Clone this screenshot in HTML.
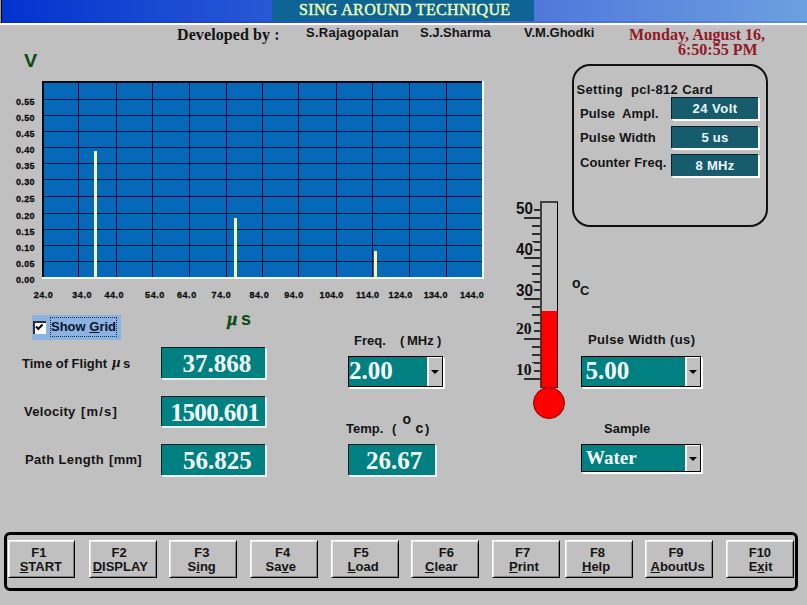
<!DOCTYPE html><html><head><meta charset="utf-8"><style>
*{margin:0;padding:0;box-sizing:border-box}
html,body{width:807px;height:605px;overflow:hidden;background:#c0c0c0;position:relative;font-family:"Liberation Sans",sans-serif}
.abs{position:absolute;white-space:pre;line-height:1}
.val{position:absolute;background:#008080;border-top:1px solid #0c2222;border-left:1px solid #0c2222;box-shadow:1px 1px 0 #f4ffff,2px 2px 0 #e8f4f4}
.valtxt{position:absolute;font-family:"Liberation Serif",serif;font-weight:bold;font-size:25px;color:#f6ffff;line-height:1;white-space:pre}
.gl{position:absolute;background:#000a3c}
.tick{position:absolute;height:2px;background:#303030}
.btn{position:absolute;top:540px;height:38px;background:#c0c0c0;border-top:1px solid #ffffff;border-left:1px solid #ffffff;border-right:1px solid #000;border-bottom:1px solid #000;box-shadow:inset 1px 1px 0 #e8e8e8,inset -1px -1px 0 #808080}
.bt{position:absolute;left:0;right:0;text-align:center;font-family:"Liberation Sans",sans-serif;font-weight:bold;font-size:13px;color:#141414;line-height:1;white-space:pre}
.u{text-decoration:underline}
.combo{position:absolute;background:#008080;border:1px solid #000;box-shadow:1px 1px 0 #fff,2px 2px 0 #fff}
.cbtn{position:absolute;top:0;bottom:0;right:0;width:15px;background:#c0c0c0;border-left:2px solid #fff;border-top:1px solid #fff}
.arr{position:absolute;left:1.5px;width:0;height:0;border-left:4px solid transparent;border-right:4px solid transparent;border-top:4px solid #000}
.sbox{position:absolute;left:671px;width:87px;height:22px;background:#165c6c;border-top:1px solid #0a2030;border-left:1px solid #0a2030;box-shadow:1px 1px 0 #fff,2px 2px 0 #fff}
.stxt{position:absolute;left:0;right:0;text-align:center;font-family:"Liberation Sans",sans-serif;font-weight:bold;font-size:13px;color:#eef8ff;line-height:1;white-space:pre}
</style></head><body>

<div class="abs" style="left:0;top:0;width:807px;height:23px;background:linear-gradient(90deg,#0432d0 0%,#2858d4 33%,#5078dc 66.5%,#6ca0e0 100%)"></div>
<div class="abs" style="left:0;top:0;width:1px;height:24px;background:#a0a0a0"></div>
<div class="abs" style="left:1px;top:0;width:1px;height:24px;background:#000"></div>
<div class="abs" style="left:0;top:21px;width:807px;height:2px;background:rgba(0,20,120,0.12)"></div>
<div class="abs" style="left:0;top:23px;width:807px;height:2px;background:#ffffff"></div>
<div class="abs" style="left:0;top:25px;width:807px;height:3px;background:#c8c2c6"></div>
<div class="abs" style="left:272px;top:0;width:262px;height:21px;background:#0e6494"></div>
<div class="abs" style="left:299px;top:2px;font-family:'Liberation Serif',serif;font-weight:normal;font-size:16px;letter-spacing:0.35px;color:#f4ffc0;-webkit-text-stroke:0.45px #f0fcb0">SING AROUND TECHNIQUE</div>
<div class="abs" style="left:177px;top:27px;font-family:'Liberation Serif',serif;font-weight:bold;font-size:16px;letter-spacing:0.1px;color:#141414;">Developed by :</div>
<div class="abs" style="left:306px;top:26px;font-family:'Liberation Sans',sans-serif;font-weight:bold;font-size:13px;letter-spacing:0.25px;color:#141414;">S.Rajagopalan</div>
<div class="abs" style="left:420px;top:26px;font-family:'Liberation Sans',sans-serif;font-weight:bold;font-size:13px;letter-spacing:0px;color:#141414;">S.J.Sharma</div>
<div class="abs" style="left:524px;top:26px;font-family:'Liberation Sans',sans-serif;font-weight:bold;font-size:13px;letter-spacing:0px;color:#141414;">V.M.Ghodki</div>
<div class="abs" style="left:629px;top:27px;font-family:'Liberation Serif',serif;font-weight:bold;font-size:16px;letter-spacing:0px;color:#921828;">Monday, August 16,</div>
<div class="abs" style="left:678px;top:42px;font-family:'Liberation Serif',serif;font-weight:bold;font-size:16px;letter-spacing:0px;color:#921828;">6:50:55 PM</div>
<div class="abs" style="left:24px;top:52px;font-family:'Liberation Sans',sans-serif;font-weight:bold;font-size:18px;letter-spacing:0px;color:#0c4a12;transform:scaleX(1.1);transform-origin:0 0">V</div>
<div class="abs" style="left:42px;top:81px;width:442px;height:198px;background:#f4fcff"></div>
<div class="abs" style="left:42px;top:81px;width:440px;height:196px;background:#000814"></div>
<div class="abs" style="left:44px;top:83px;width:438px;height:194px;background:#0568b8"></div>
<div class="gl" style="left:78px;top:83px;width:1px;height:194px"></div>
<div class="gl" style="left:116px;top:83px;width:1px;height:194px"></div>
<div class="gl" style="left:152px;top:83px;width:1px;height:194px"></div>
<div class="gl" style="left:189px;top:83px;width:1px;height:194px"></div>
<div class="gl" style="left:226px;top:83px;width:1px;height:194px"></div>
<div class="gl" style="left:262px;top:83px;width:1px;height:194px"></div>
<div class="gl" style="left:298px;top:83px;width:1px;height:194px"></div>
<div class="gl" style="left:336px;top:83px;width:1px;height:194px"></div>
<div class="gl" style="left:372px;top:83px;width:1px;height:194px"></div>
<div class="gl" style="left:409px;top:83px;width:1px;height:194px"></div>
<div class="gl" style="left:446px;top:83px;width:1px;height:194px"></div>
<div class="gl" style="left:44px;top:99px;width:438px;height:1px"></div>
<div class="gl" style="left:44px;top:115px;width:438px;height:1px"></div>
<div class="gl" style="left:44px;top:131px;width:438px;height:1px"></div>
<div class="gl" style="left:44px;top:147px;width:438px;height:1px"></div>
<div class="gl" style="left:44px;top:163px;width:438px;height:1px"></div>
<div class="gl" style="left:44px;top:179px;width:438px;height:1px"></div>
<div class="gl" style="left:44px;top:196px;width:438px;height:1px"></div>
<div class="gl" style="left:44px;top:213px;width:438px;height:1px"></div>
<div class="gl" style="left:44px;top:229px;width:438px;height:1px"></div>
<div class="gl" style="left:44px;top:245px;width:438px;height:1px"></div>
<div class="gl" style="left:44px;top:261px;width:438px;height:1px"></div>
<div class="abs" style="left:94px;top:151px;width:3px;height:126px;background:#f4f6a0"></div>
<div class="abs" style="left:234px;top:218px;width:3px;height:59px;background:#f4f6a0"></div>
<div class="abs" style="left:374px;top:251px;width:3px;height:26px;background:#f4f6a0"></div>
<div class="abs" style="left:16px;top:98px;font-family:'Liberation Sans',sans-serif;font-weight:bold;font-size:9px;letter-spacing:0.35px;color:#0c0c0c;-webkit-text-stroke:0.3px #0c0c0c">0.55</div>
<div class="abs" style="left:16px;top:114px;font-family:'Liberation Sans',sans-serif;font-weight:bold;font-size:9px;letter-spacing:0.35px;color:#0c0c0c;-webkit-text-stroke:0.3px #0c0c0c">0.50</div>
<div class="abs" style="left:16px;top:130px;font-family:'Liberation Sans',sans-serif;font-weight:bold;font-size:9px;letter-spacing:0.35px;color:#0c0c0c;-webkit-text-stroke:0.3px #0c0c0c">0.45</div>
<div class="abs" style="left:16px;top:146px;font-family:'Liberation Sans',sans-serif;font-weight:bold;font-size:9px;letter-spacing:0.35px;color:#0c0c0c;-webkit-text-stroke:0.3px #0c0c0c">0.40</div>
<div class="abs" style="left:16px;top:162px;font-family:'Liberation Sans',sans-serif;font-weight:bold;font-size:9px;letter-spacing:0.35px;color:#0c0c0c;-webkit-text-stroke:0.3px #0c0c0c">0.35</div>
<div class="abs" style="left:16px;top:178px;font-family:'Liberation Sans',sans-serif;font-weight:bold;font-size:9px;letter-spacing:0.35px;color:#0c0c0c;-webkit-text-stroke:0.3px #0c0c0c">0.30</div>
<div class="abs" style="left:16px;top:195px;font-family:'Liberation Sans',sans-serif;font-weight:bold;font-size:9px;letter-spacing:0.35px;color:#0c0c0c;-webkit-text-stroke:0.3px #0c0c0c">0.25</div>
<div class="abs" style="left:16px;top:212px;font-family:'Liberation Sans',sans-serif;font-weight:bold;font-size:9px;letter-spacing:0.35px;color:#0c0c0c;-webkit-text-stroke:0.3px #0c0c0c">0.20</div>
<div class="abs" style="left:16px;top:228px;font-family:'Liberation Sans',sans-serif;font-weight:bold;font-size:9px;letter-spacing:0.35px;color:#0c0c0c;-webkit-text-stroke:0.3px #0c0c0c">0.15</div>
<div class="abs" style="left:16px;top:244px;font-family:'Liberation Sans',sans-serif;font-weight:bold;font-size:9px;letter-spacing:0.35px;color:#0c0c0c;-webkit-text-stroke:0.3px #0c0c0c">0.10</div>
<div class="abs" style="left:16px;top:260px;font-family:'Liberation Sans',sans-serif;font-weight:bold;font-size:9px;letter-spacing:0.35px;color:#0c0c0c;-webkit-text-stroke:0.3px #0c0c0c">0.05</div>
<div class="abs" style="left:16px;top:276px;font-family:'Liberation Sans',sans-serif;font-weight:bold;font-size:9px;letter-spacing:0.35px;color:#0c0c0c;-webkit-text-stroke:0.3px #0c0c0c">0.00</div>
<div class="abs" style="left:33.7px;top:291px;font-family:'Liberation Sans',sans-serif;font-weight:bold;font-size:9px;letter-spacing:0.55px;color:#0c0c0c;-webkit-text-stroke:0.3px #0c0c0c">24.0</div>
<div class="abs" style="left:72.3px;top:291px;font-family:'Liberation Sans',sans-serif;font-weight:bold;font-size:9px;letter-spacing:0.55px;color:#0c0c0c;-webkit-text-stroke:0.3px #0c0c0c">34.0</div>
<div class="abs" style="left:104.4px;top:291px;font-family:'Liberation Sans',sans-serif;font-weight:bold;font-size:9px;letter-spacing:0.55px;color:#0c0c0c;-webkit-text-stroke:0.3px #0c0c0c">44.0</div>
<div class="abs" style="left:145.1px;top:291px;font-family:'Liberation Sans',sans-serif;font-weight:bold;font-size:9px;letter-spacing:0.55px;color:#0c0c0c;-webkit-text-stroke:0.3px #0c0c0c">54.0</div>
<div class="abs" style="left:177.0px;top:291px;font-family:'Liberation Sans',sans-serif;font-weight:bold;font-size:9px;letter-spacing:0.55px;color:#0c0c0c;-webkit-text-stroke:0.3px #0c0c0c">64.0</div>
<div class="abs" style="left:211.6px;top:291px;font-family:'Liberation Sans',sans-serif;font-weight:bold;font-size:9px;letter-spacing:0.55px;color:#0c0c0c;-webkit-text-stroke:0.3px #0c0c0c">74.0</div>
<div class="abs" style="left:249.5px;top:291px;font-family:'Liberation Sans',sans-serif;font-weight:bold;font-size:9px;letter-spacing:0.55px;color:#0c0c0c;-webkit-text-stroke:0.3px #0c0c0c">84.0</div>
<div class="abs" style="left:284.2px;top:291px;font-family:'Liberation Sans',sans-serif;font-weight:bold;font-size:9px;letter-spacing:0.55px;color:#0c0c0c;-webkit-text-stroke:0.3px #0c0c0c">94.0</div>
<div class="abs" style="left:319.59999999999997px;top:291px;font-family:'Liberation Sans',sans-serif;font-weight:bold;font-size:9px;letter-spacing:0.3px;color:#0c0c0c;-webkit-text-stroke:0.3px #0c0c0c">104.0</div>
<div class="abs" style="left:355.9px;top:291px;font-family:'Liberation Sans',sans-serif;font-weight:bold;font-size:9px;letter-spacing:0.3px;color:#0c0c0c;-webkit-text-stroke:0.3px #0c0c0c">114.0</div>
<div class="abs" style="left:388.59999999999997px;top:291px;font-family:'Liberation Sans',sans-serif;font-weight:bold;font-size:9px;letter-spacing:0.3px;color:#0c0c0c;-webkit-text-stroke:0.3px #0c0c0c">124.0</div>
<div class="abs" style="left:423.7px;top:291px;font-family:'Liberation Sans',sans-serif;font-weight:bold;font-size:9px;letter-spacing:0.3px;color:#0c0c0c;-webkit-text-stroke:0.3px #0c0c0c">134.0</div>
<div class="abs" style="left:460.0px;top:291px;font-family:'Liberation Sans',sans-serif;font-weight:bold;font-size:9px;letter-spacing:0.3px;color:#0c0c0c;-webkit-text-stroke:0.3px #0c0c0c">144.0</div>
<div class="abs" style="left:32px;top:315px;width:89px;height:25px;background:#8cb2e2"></div>
<div class="abs" style="left:33px;top:321px;width:13px;height:13px;background:#fff;border-top:2px solid #303030;border-left:2px solid #303030"></div>
<svg class="abs" style="left:34px;top:322px" width="12" height="12" viewBox="0 0 12 12"><path d="M2 4.5 L4.3 7 L8.5 2.5" stroke="#000" stroke-width="1.9" fill="none"/></svg>
<div class="abs" style="left:50px;top:317px;width:67px;height:20px;border:1px dotted #203050"></div>
<div class="abs" style="left:51px;top:320px;font-family:'Liberation Sans',sans-serif;font-weight:bold;font-size:13px;letter-spacing:0px;color:#0a1428;">Show <span class="u">G</span>rid</div>
<div class="abs" style="left:227px;top:310px;font-family:'Liberation Serif',serif;font-weight:bold;font-size:18px;letter-spacing:0px;color:#0c4a12;font-style:italic;-webkit-text-stroke:0.4px #0c4a12">µ</div>
<div class="abs" style="left:241px;top:310px;font-family:'Liberation Sans',sans-serif;font-weight:bold;font-size:18px;letter-spacing:0px;color:#0c4a12;">s</div>
<div class="abs" style="left:22px;top:357px;font-family:'Liberation Sans',sans-serif;font-weight:bold;font-size:13px;letter-spacing:0px;color:#141414;">Time of Flight</div>
<div class="abs" style="left:112px;top:355px;font-family:'Liberation Serif',serif;font-weight:bold;font-size:15px;letter-spacing:0px;color:#141414;font-style:italic">µ</div>
<div class="abs" style="left:123px;top:357px;font-family:'Liberation Sans',sans-serif;font-weight:bold;font-size:13px;letter-spacing:0px;color:#141414;">s</div>
<div class="abs" style="left:24px;top:405px;font-family:'Liberation Sans',sans-serif;font-weight:bold;font-size:13px;letter-spacing:0.3px;color:#141414;">Velocity</div>
<div class="abs" style="left:81px;top:405px;font-family:'Liberation Sans',sans-serif;font-weight:bold;font-size:13px;letter-spacing:1.2px;color:#141414;">[m/s]</div>
<div class="abs" style="left:25px;top:453px;font-family:'Liberation Sans',sans-serif;font-weight:bold;font-size:13px;letter-spacing:0.35px;color:#141414;">Path Length</div>
<div class="abs" style="left:109px;top:453px;font-family:'Liberation Sans',sans-serif;font-weight:bold;font-size:13px;letter-spacing:0.3px;color:#141414;">[mm]</div>
<div class="val" style="left:161px;top:347px;width:104px;height:31px"></div>
<div class="valtxt" style="left:182.5px;top:351px">37.868</div>
<div class="val" style="left:161px;top:396px;width:104px;height:30px"></div>
<div class="valtxt" style="left:170.5px;top:400px;letter-spacing:-0.6px">1500.601</div>
<div class="val" style="left:161px;top:444px;width:104px;height:31px"></div>
<div class="valtxt" style="left:183px;top:448px">56.825</div>
<div class="abs" style="left:354px;top:334px;font-family:'Liberation Sans',sans-serif;font-weight:bold;font-size:13px;letter-spacing:0px;color:#141414;">Freq.</div>
<div class="abs" style="left:400px;top:334px;font-family:'Liberation Sans',sans-serif;font-weight:bold;font-size:13px;letter-spacing:0px;color:#141414;">(</div>
<div class="abs" style="left:407px;top:334px;font-family:'Liberation Sans',sans-serif;font-weight:bold;font-size:13px;letter-spacing:0px;color:#141414;">MHz</div>
<div class="abs" style="left:437px;top:334px;font-family:'Liberation Sans',sans-serif;font-weight:bold;font-size:13px;letter-spacing:0px;color:#141414;">)</div>
<div class="combo" style="left:348px;top:356px;width:95px;height:31px"><div class="cbtn"><div class="arr" style="top:12px"></div></div></div>
<div class="valtxt" style="left:349px;top:358px">2.00</div>
<div class="abs" style="left:346px;top:422px;font-family:'Liberation Sans',sans-serif;font-weight:bold;font-size:13px;letter-spacing:0px;color:#141414;">Temp.</div>
<div class="abs" style="left:392px;top:422px;font-family:'Liberation Sans',sans-serif;font-weight:bold;font-size:13px;letter-spacing:0px;color:#141414;">(</div>
<div class="abs" style="left:402.5px;top:412px;font-family:'Liberation Sans',sans-serif;font-weight:bold;font-size:14px;letter-spacing:0px;color:#141414;">o</div>
<div class="abs" style="left:415.5px;top:421px;font-family:'Liberation Sans',sans-serif;font-weight:bold;font-size:14px;letter-spacing:0px;color:#141414;">c</div>
<div class="abs" style="left:425px;top:422px;font-family:'Liberation Sans',sans-serif;font-weight:bold;font-size:13px;letter-spacing:0px;color:#141414;">)</div>
<div class="val" style="left:348px;top:444px;width:87px;height:31px"></div>
<div class="valtxt" style="left:366px;top:448px">26.67</div>
<div class="abs" style="left:588px;top:333px;font-family:'Liberation Sans',sans-serif;font-weight:bold;font-size:13px;letter-spacing:0.35px;color:#141414;">Pulse Width (us)</div>
<div class="combo" style="left:581px;top:356px;width:120px;height:31px"><div class="cbtn"><div class="arr" style="top:12px"></div></div></div>
<div class="valtxt" style="left:585.5px;top:358px">5.00</div>
<div class="abs" style="left:604px;top:422px;font-family:'Liberation Sans',sans-serif;font-weight:bold;font-size:13px;letter-spacing:0px;color:#141414;">Sample</div>
<div class="combo" style="left:581px;top:444px;width:120px;height:28px"><div class="cbtn"><div class="arr" style="top:11px"></div></div></div>
<div class="valtxt" style="left:586px;top:448px;font-size:19px">Water</div>
<div class="abs" style="left:571.5px;top:63.5px;width:196px;height:163px;border:2px solid #101010;border-radius:18px"></div>
<div class="abs" style="left:576.5px;top:83px;font-family:'Liberation Sans',sans-serif;font-weight:bold;font-size:13px;letter-spacing:0.35px;color:#141414;">Setting  pcl-812 Card</div>
<div class="abs" style="left:580px;top:107px;font-family:'Liberation Sans',sans-serif;font-weight:bold;font-size:13px;letter-spacing:0.1px;color:#141414;">Pulse  Ampl.</div>
<div class="abs" style="left:580px;top:131px;font-family:'Liberation Sans',sans-serif;font-weight:bold;font-size:13px;letter-spacing:0.15px;color:#141414;">Pulse Width</div>
<div class="abs" style="left:580px;top:156px;font-family:'Liberation Sans',sans-serif;font-weight:bold;font-size:13px;letter-spacing:0.1px;color:#141414;">Counter Freq.</div>
<div class="sbox" style="top:97px"><div class="stxt" style="top:4px;letter-spacing:0.5px">24 Volt</div></div>
<div class="sbox" style="top:126px"><div class="stxt" style="top:4px;letter-spacing:0.2px">5 us</div></div>
<div class="sbox" style="top:154px"><div class="stxt" style="top:4px;letter-spacing:0.3px">8 MHz</div></div>
<div class="abs" style="left:540px;top:201px;width:18px;height:187px;background:#c0c0c0;border-left:2px solid #404040;border-top:2px solid #404040;border-right:1px solid #000"></div>
<div class="abs" style="left:541px;top:311px;width:16px;height:77px;background:#ff0000;border-left:1px solid #a00000;border-bottom:1px solid #900000"></div>
<div class="abs" style="left:533px;top:387px;width:32px;height:32px;border-radius:50%;background:#ff0000;border:1.5px solid #8a0000"></div>
<div class="tick" style="left:532px;top:209px;width:8px"></div>
<div class="tick" style="left:524px;top:217px;width:16px"></div>
<div class="tick" style="left:532px;top:225px;width:8px"></div>
<div class="tick" style="left:532px;top:233px;width:8px"></div>
<div class="tick" style="left:532px;top:241px;width:8px"></div>
<div class="tick" style="left:532px;top:249px;width:8px"></div>
<div class="tick" style="left:524px;top:257px;width:16px"></div>
<div class="tick" style="left:532px;top:265px;width:8px"></div>
<div class="tick" style="left:532px;top:273px;width:8px"></div>
<div class="tick" style="left:532px;top:281px;width:8px"></div>
<div class="tick" style="left:532px;top:289px;width:8px"></div>
<div class="tick" style="left:524px;top:298px;width:16px"></div>
<div class="tick" style="left:532px;top:306px;width:8px"></div>
<div class="tick" style="left:532px;top:314px;width:8px"></div>
<div class="tick" style="left:532px;top:322px;width:8px"></div>
<div class="tick" style="left:532px;top:330px;width:8px"></div>
<div class="tick" style="left:524px;top:338px;width:16px"></div>
<div class="tick" style="left:532px;top:346px;width:8px"></div>
<div class="tick" style="left:532px;top:354px;width:8px"></div>
<div class="tick" style="left:532px;top:362px;width:8px"></div>
<div class="tick" style="left:532px;top:370px;width:8px"></div>
<div class="tick" style="left:524px;top:378px;width:16px"></div>
<div class="abs" style="left:515px;top:201px;width:19px;height:14px;background:#c0c0c0"></div>
<div class="abs" style="left:516px;top:201px;font-family:'Liberation Sans',sans-serif;font-weight:bold;font-size:16px;letter-spacing:0px;color:#101010;transform:scaleX(0.95);transform-origin:0 0">50</div>
<div class="abs" style="left:515px;top:242px;width:19px;height:14px;background:#c0c0c0"></div>
<div class="abs" style="left:516px;top:242px;font-family:'Liberation Sans',sans-serif;font-weight:bold;font-size:16px;letter-spacing:0px;color:#101010;transform:scaleX(0.95);transform-origin:0 0">40</div>
<div class="abs" style="left:515px;top:282px;width:19px;height:14px;background:#c0c0c0"></div>
<div class="abs" style="left:516px;top:283px;font-family:'Liberation Sans',sans-serif;font-weight:bold;font-size:16px;letter-spacing:0px;color:#101010;transform:scaleX(0.95);transform-origin:0 0">30</div>
<div class="abs" style="left:515px;top:322px;width:19px;height:14px;background:#c0c0c0"></div>
<div class="abs" style="left:516px;top:320px;font-family:'Liberation Serif',serif;font-weight:bold;font-size:17px;letter-spacing:0px;color:#101010;transform:scaleX(0.92);transform-origin:0 0">20</div>
<div class="abs" style="left:515px;top:363px;width:19px;height:14px;background:#c0c0c0"></div>
<div class="abs" style="left:516px;top:361px;font-family:'Liberation Serif',serif;font-weight:bold;font-size:17px;letter-spacing:0px;color:#101010;transform:scaleX(0.92);transform-origin:0 0">10</div>
<div class="abs" style="left:572px;top:276px;font-family:'Liberation Sans',sans-serif;font-weight:bold;font-size:14px;letter-spacing:0px;color:#141414;">o</div>
<div class="abs" style="left:580px;top:284px;font-family:'Liberation Sans',sans-serif;font-weight:bold;font-size:13px;letter-spacing:0px;color:#141414;">C</div>
<div class="abs" style="left:4px;top:532px;width:794px;height:59px;border:3px solid #000;border-radius:6px"></div>
<div class="btn" style="left:8px;width:67px"></div>
<div class="abs" style="left:31.3px;top:546px;font-family:'Liberation Sans',sans-serif;font-weight:bold;font-size:13px;letter-spacing:0px;color:#141414;">F1</div>
<div class="abs" style="left:19.7px;top:560px;font-family:'Liberation Sans',sans-serif;font-weight:bold;font-size:13px;letter-spacing:0px;color:#141414;"><span class="u">S</span>TART</div>
<div class="btn" style="left:89px;width:68px"></div>
<div class="abs" style="left:111.6px;top:546px;font-family:'Liberation Sans',sans-serif;font-weight:bold;font-size:13px;letter-spacing:0px;color:#141414;">F2</div>
<div class="abs" style="left:92.7px;top:560px;font-family:'Liberation Sans',sans-serif;font-weight:bold;font-size:13px;letter-spacing:0px;color:#141414;"><span class="u">D</span>ISPLAY</div>
<div class="btn" style="left:169px;width:68px"></div>
<div class="abs" style="left:194.2px;top:546px;font-family:'Liberation Sans',sans-serif;font-weight:bold;font-size:13px;letter-spacing:0px;color:#141414;">F3</div>
<div class="abs" style="left:187.6px;top:560px;font-family:'Liberation Sans',sans-serif;font-weight:bold;font-size:13px;letter-spacing:0px;color:#141414;">S<span class="u">i</span>ng</div>
<div class="btn" style="left:250px;width:68px"></div>
<div class="abs" style="left:275px;top:546px;font-family:'Liberation Sans',sans-serif;font-weight:bold;font-size:13px;letter-spacing:0px;color:#141414;">F4</div>
<div class="abs" style="left:265.6px;top:560px;font-family:'Liberation Sans',sans-serif;font-weight:bold;font-size:13px;letter-spacing:0px;color:#141414;">Sa<span class="u">v</span>e</div>
<div class="btn" style="left:331px;width:68px"></div>
<div class="abs" style="left:353.6px;top:546px;font-family:'Liberation Sans',sans-serif;font-weight:bold;font-size:13px;letter-spacing:0px;color:#141414;">F5</div>
<div class="abs" style="left:347.6px;top:560px;font-family:'Liberation Sans',sans-serif;font-weight:bold;font-size:13px;letter-spacing:0px;color:#141414;"><span class="u">L</span>oad</div>
<div class="btn" style="left:411px;width:68px"></div>
<div class="abs" style="left:438.8px;top:546px;font-family:'Liberation Sans',sans-serif;font-weight:bold;font-size:13px;letter-spacing:0px;color:#141414;">F6</div>
<div class="abs" style="left:425px;top:560px;font-family:'Liberation Sans',sans-serif;font-weight:bold;font-size:13px;letter-spacing:0px;color:#141414;"><span class="u">C</span>lear</div>
<div class="btn" style="left:492px;width:68px"></div>
<div class="abs" style="left:515.1px;top:546px;font-family:'Liberation Sans',sans-serif;font-weight:bold;font-size:13px;letter-spacing:0px;color:#141414;">F7</div>
<div class="abs" style="left:509.1px;top:560px;font-family:'Liberation Sans',sans-serif;font-weight:bold;font-size:13px;letter-spacing:0px;color:#141414;"><span class="u">P</span>rint</div>
<div class="btn" style="left:565px;width:68px"></div>
<div class="abs" style="left:589.9px;top:546px;font-family:'Liberation Sans',sans-serif;font-weight:bold;font-size:13px;letter-spacing:0px;color:#141414;">F8</div>
<div class="abs" style="left:582px;top:560px;font-family:'Liberation Sans',sans-serif;font-weight:bold;font-size:13px;letter-spacing:0px;color:#141414;"><span class="u">H</span>elp</div>
<div class="btn" style="left:645px;width:68px"></div>
<div class="abs" style="left:668.4px;top:546px;font-family:'Liberation Sans',sans-serif;font-weight:bold;font-size:13px;letter-spacing:0px;color:#141414;">F9</div>
<div class="abs" style="left:650.5px;top:560px;font-family:'Liberation Sans',sans-serif;font-weight:bold;font-size:13px;letter-spacing:0px;color:#141414;"><span class="u">A</span>boutUs</div>
<div class="btn" style="left:726px;width:68px"></div>
<div class="abs" style="left:748.7px;top:546px;font-family:'Liberation Sans',sans-serif;font-weight:bold;font-size:13px;letter-spacing:0px;color:#141414;">F10</div>
<div class="abs" style="left:748.7px;top:560px;font-family:'Liberation Sans',sans-serif;font-weight:bold;font-size:13px;letter-spacing:0px;color:#141414;">E<span class="u">x</span>it</div>
</body></html>
